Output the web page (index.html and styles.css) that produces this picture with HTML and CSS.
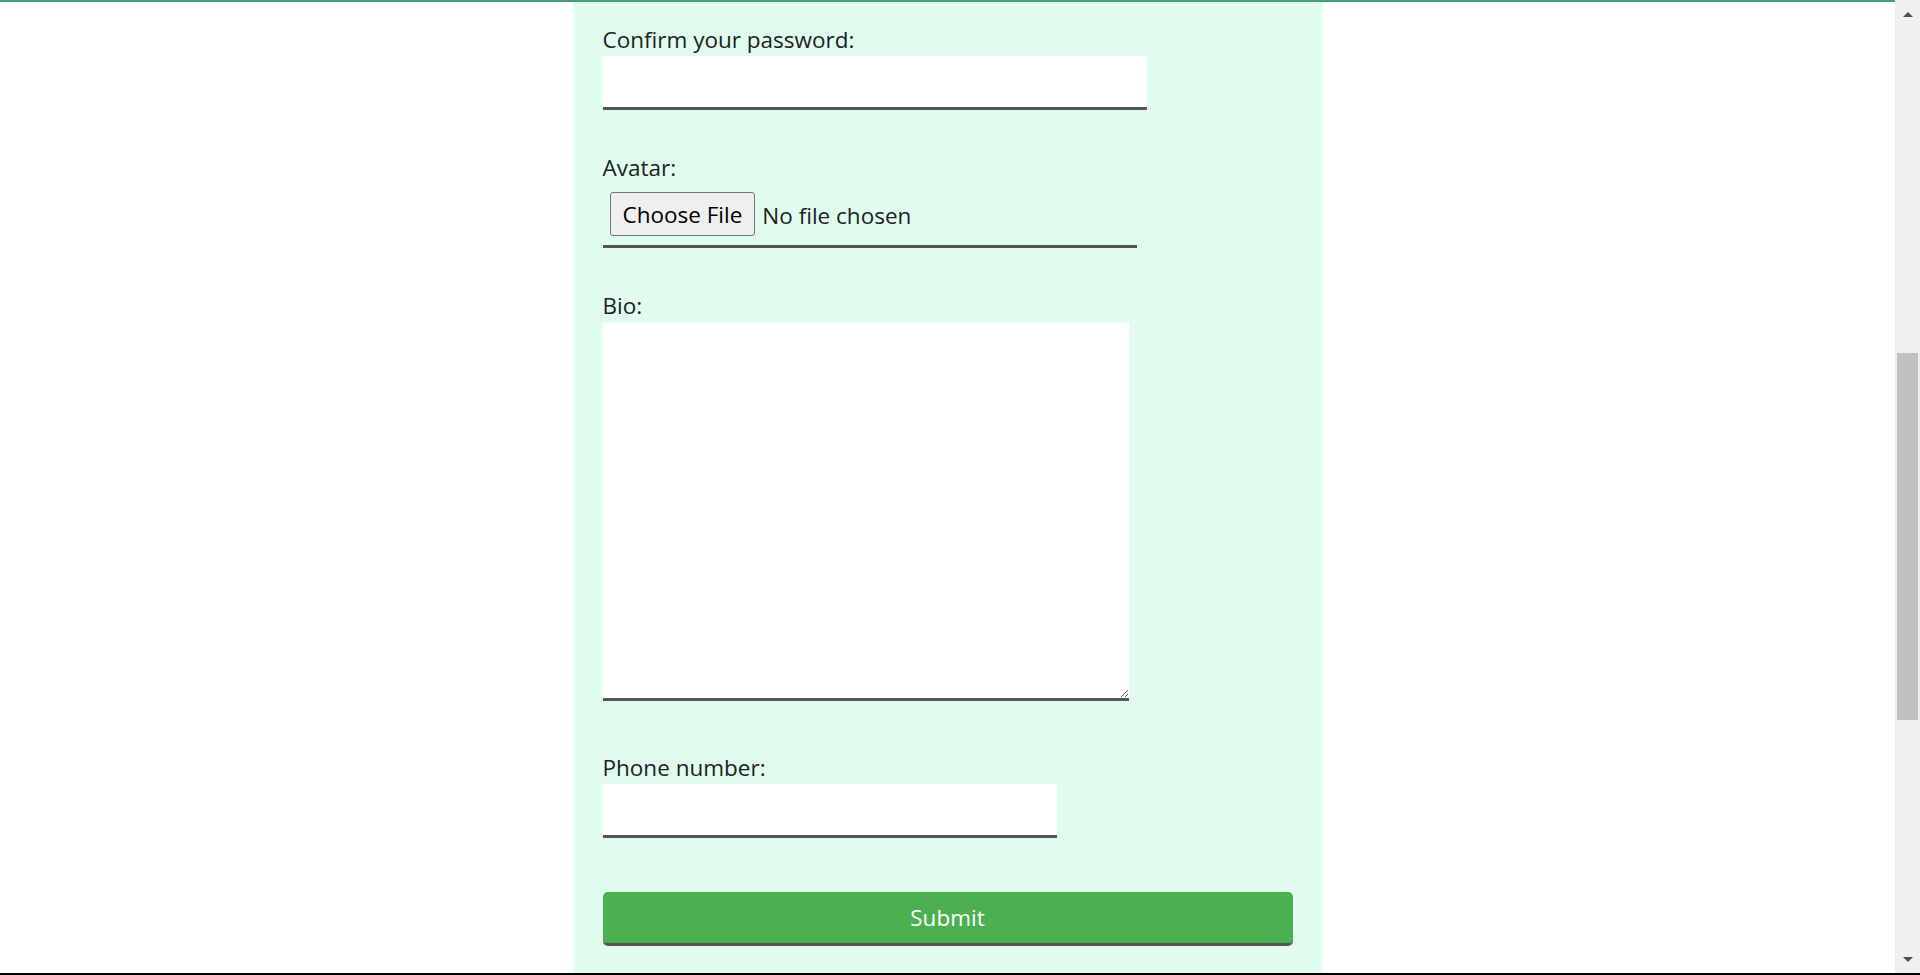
FILE: index.html
```html
<!DOCTYPE html>
<html lang="en">
<head>
<meta charset="utf-8">
<title>Sign up</title>
<link rel="stylesheet" href="styles.css">
</head>
<body>
<div class="window">
  <div class="page">
    <div class="topline"></div>
    <div class="panel-row">
      <form class="panel" onsubmit="return false">
        <div class="field">
          <label class="label" for="confirm">Confirm your password:</label>
          <input class="text-input input-wide" id="confirm" type="password">
        </div>
        <div class="field">
          <div class="label">Avatar:</div>
          <div class="file-input">
            <span class="file-btn">Choose File</span>
            <span class="file-name">No file chosen</span>
          </div>
        </div>
        <div class="field field-bio">
          <label class="label" for="bio">Bio:</label>
          <textarea class="bio" id="bio"></textarea>
        </div>
        <div class="field field-phone">
          <label class="label" for="phone">Phone number:</label>
          <input class="text-input input-phone" id="phone" type="tel">
        </div>
        <button class="submit" type="submit">Submit</button>
      </form>
    </div>
  </div>
  <div class="scrollbar">
    <div class="sb-arrow sb-up"></div>
    <div class="sb-track"><div class="sb-thumb"></div></div>
    <div class="sb-arrow sb-down"></div>
  </div>
</div>
<div class="frame-bottom"></div>
</body>
</html>
```
FILE: styles.css
```css
html, body {
  margin: 0;
  padding: 0;
  height: 975px;
  overflow: hidden;
  background: #ffffff;
  font-family: "Open Sans", "Noto Sans", sans-serif;
  color: #222222;
}

.window {
  display: flex;
  height: 973px;
}

.page {
  flex: 1;
  display: flex;
  flex-direction: column;
  min-width: 0;
}

.topline {
  height: 2px;
  background: #4a9a7e;
}

.panel-row {
  flex: 1;
  display: flex;
  justify-content: center;
}

.panel {
  width: 750px;
  box-sizing: border-box;
  padding: 24px 30px 0 30px;
  background: #e0fcef;
  display: flex;
  flex-direction: column;
  align-items: flex-start;
}

.field {
  display: flex;
  flex-direction: column;
  align-items: flex-start;
  margin-bottom: 44px;
}

.field-bio {
  margin-bottom: 53px;
}

.field-phone {
  margin-bottom: 54px;
}

.label {
  display: block;
  font-size: 22.5px;
  line-height: 28px;
  margin-bottom: 2px;
}

.text-input {
  box-sizing: border-box;
  height: 54px;
  border: none;
  border-bottom: 3px solid #555555;
  background: #ffffff;
  padding: 0 10px;
  margin: 0;
  font-family: inherit;
  font-size: 22px;
  outline: none;
}

.input-wide {
  width: 544px;
}

.input-phone {
  width: 454px;
}

.file-input {
  box-sizing: border-box;
  width: 534px;
  display: flex;
  align-items: center;
  padding: 8px 7px 9px 7px;
  border-bottom: 3px solid #555555;
  font-size: 22.5px;
}

.file-btn {
  box-sizing: border-box;
  height: 44px;
  display: flex;
  align-items: center;
  padding: 1px 12px 0 12px;
  background: #efefef;
  border: 1px solid #767676;
  border-radius: 3px;
  color: #000000;
  margin-right: 7px;
}

.file-name {
  color: #222222;
  padding-top: 2px;
}

.bio {
  box-sizing: border-box;
  display: block;
  width: 526px;
  height: 378px;
  margin: 1px 0 0 0;
  border: none;
  border-bottom: 3px solid #555555;
  background: #ffffff;
  padding: 4px;
  font-family: inherit;
  font-size: 22px;
  outline: none;
  resize: both;
}

.submit {
  box-sizing: border-box;
  width: 690px;
  height: 54px;
  margin: 0;
  border: none;
  border-bottom: 3px solid #555555;
  border-radius: 5px;
  background: #4caf50;
  color: #ffffff;
  font-family: inherit;
  font-size: 22.5px;
  line-height: 1;
  padding: 2px 0 0 0;
  cursor: pointer;
}

.scrollbar {
  width: 25px;
  background: #f0f0f0;
  display: flex;
  flex-direction: column;
}

.sb-arrow {
  height: 25px;
  display: flex;
  justify-content: center;
  align-items: center;
}

.sb-up::before {
  content: "";
  width: 0;
  height: 0;
  border-left: 5px solid transparent;
  border-right: 5px solid transparent;
  border-bottom: 5px solid #505050;
  margin-top: 3px;
}

.sb-down::before {
  content: "";
  width: 0;
  height: 0;
  border-left: 5px solid transparent;
  border-right: 5px solid transparent;
  border-top: 5px solid #505050;
  margin-top: -3px;
}

.sb-track {
  flex: 1;
  display: flex;
  flex-direction: column;
  padding: 0 2px;
}

.sb-thumb {
  margin-top: 328px;
  height: 367px;
  background: #c1c1c1;
}

.frame-bottom {
  height: 2px;
  background: #000000;
}
```
